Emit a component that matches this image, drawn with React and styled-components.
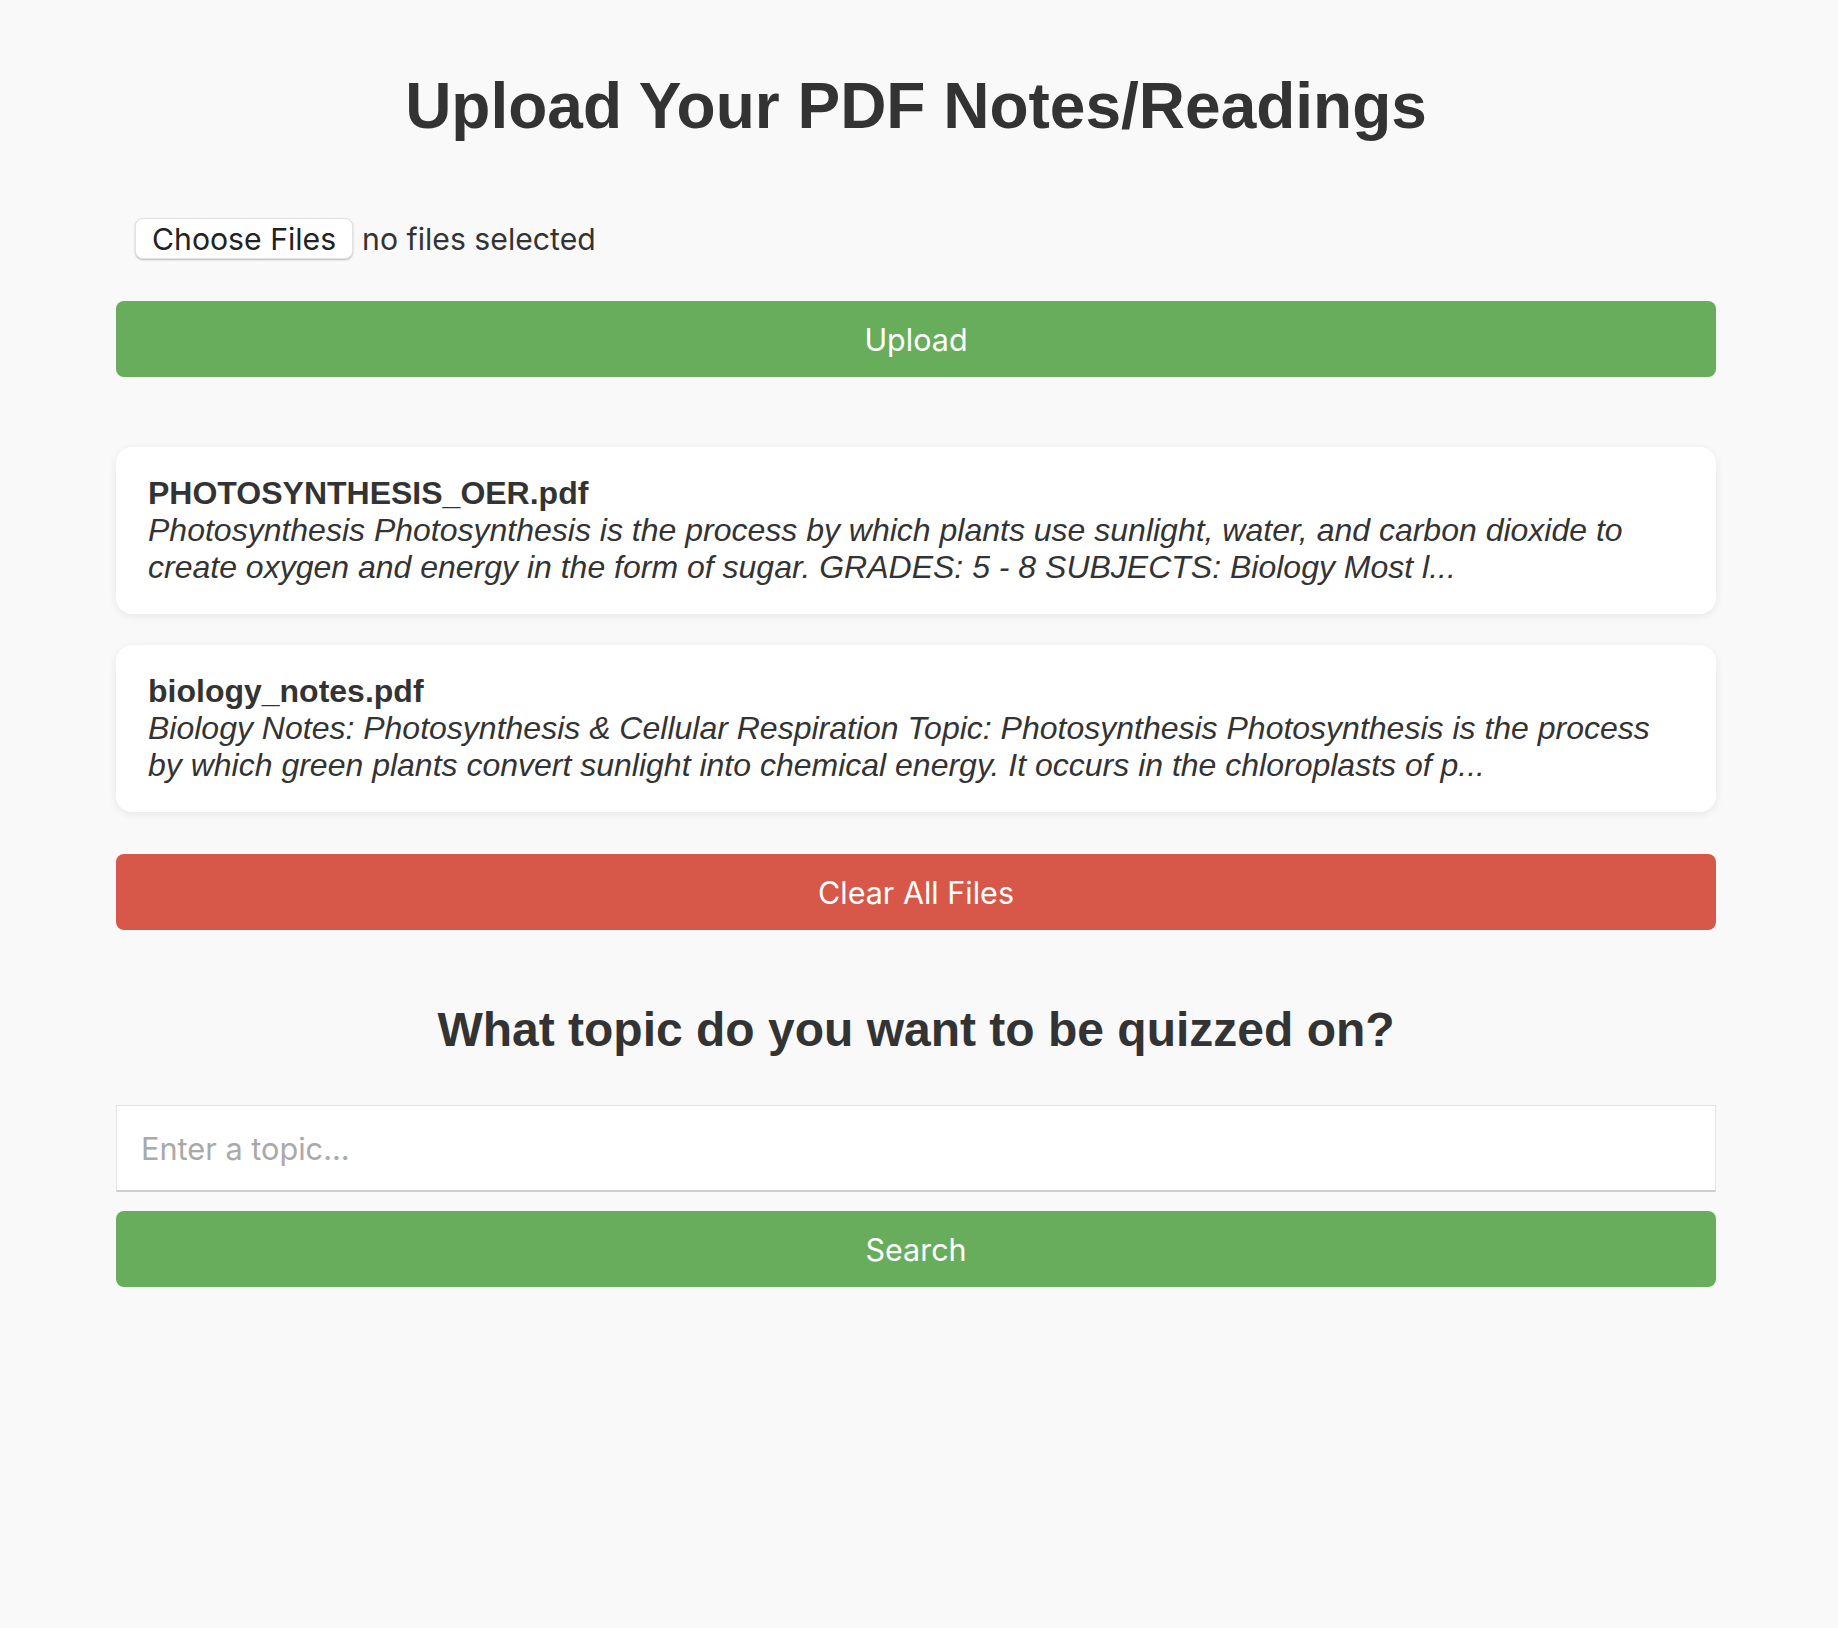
import React, { useState } from "react";
import styled, { createGlobalStyle } from "styled-components";

const GlobalStyle = createGlobalStyle`
  * {
    box-sizing: border-box;
  }
  body {
    margin: 0;
    padding: 0 6px 0 0;
    background-color: #f9f9f9;
    color: #333;
    font-family: "Liberation Sans", Arial, Helvetica, sans-serif;
  }
`;

const Container = styled.div`
  width: 1600px;
  margin: 0 auto;
  padding: 69px 0 200px;
  display: flex;
  flex-direction: column;
`;

const Title = styled.h1`
  margin: 0;
  font-size: 64px;
  font-weight: 700;
  text-align: center;
  color: #333;
`;

const SubTitle = styled.h2`
  margin: 72px 0 0;
  font-size: 48px;
  font-weight: 700;
  text-align: center;
  color: #333;
`;

const FileRow = styled.div`
  display: flex;
  align-items: center;
  gap: 9px;
  margin: 75px 0 0 19px;
  font-family: Inter, "Noto Sans", sans-serif;
`;

const ChooseButton = styled.label`
  display: flex;
  align-items: center;
  height: 41px;
  padding: 0 16px;
  background: #fff;
  border-radius: 8px;
  border: 1px solid #e2e2e2;
  box-shadow: 0 1px 2px rgba(0, 0, 0, 0.25);
  font-size: 30.2px;
  color: #222;
  cursor: pointer;

  input {
    display: none;
  }
`;

const FileStatus = styled.span`
  font-size: 30.2px;
  color: #333;
`;

const Button = styled.button`
  display: block;
  width: 100%;
  height: 76px;
  margin-top: ${(props) => props.gap}px;
  border: none;
  border-radius: 8px;
  background-color: ${(props) => (props.danger ? "#d75848" : "#68ad5c")};
  color: #fff;
  font-family: Inter, "Noto Sans", sans-serif;
  font-size: 30.5px;
  cursor: pointer;
`;

const FileList = styled.div`
  display: flex;
  flex-direction: column;
  gap: 31px;
  margin-top: 70px;
`;

const FileCard = styled.div`
  padding: 28px 32px;
  background: #fff;
  border-radius: 16px;
  box-shadow: 0 2px 8px rgba(0, 0, 0, 0.08);
  font-size: 32px;
`;

const FileName = styled.div`
  font-weight: 700;
`;

const Preview = styled.div`
  font-style: italic;
`;

const TopicInput = styled.input`
  display: block;
  width: 100%;
  height: 87px;
  margin-top: 48px;
  padding: 0 24px;
  border: 1px solid #e4e4e4;
  border-bottom: 2px solid #cfcfcf;
  background: #fff;
  font-family: Inter, "Noto Sans", sans-serif;
  font-size: 30.7px;
  color: #333;
  outline: none;

  &::placeholder {
    color: #a9a9a9;
  }
`;

const files = [
  {
    name: "PHOTOSYNTHESIS_OER.pdf",
    preview:
      "Photosynthesis Photosynthesis is the process by which plants use sunlight, water, and carbon dioxide to create oxygen and energy in the form of sugar. GRADES: 5 - 8 SUBJECTS: Biology Most l...",
  },
  {
    name: "biology_notes.pdf",
    preview:
      "Biology Notes: Photosynthesis & Cellular Respiration Topic: Photosynthesis Photosynthesis is the process by which green plants convert sunlight into chemical energy. It occurs in the chloroplasts of p...",
  },
];

const App = () => {
  const [topic, setTopic] = useState("");

  return (
    <>
      <GlobalStyle />
      <Container>
        <Title>Upload Your PDF Notes/Readings</Title>
        <FileRow>
          <ChooseButton>
            Choose Files
            <input type="file" multiple accept="application/pdf" />
          </ChooseButton>
          <FileStatus>no files selected</FileStatus>
        </FileRow>
        <Button gap={42}>Upload</Button>

        <FileList>
          {files.map((file) => (
            <FileCard key={file.name}>
              <FileName>{file.name}</FileName>
              <Preview>{file.preview}</Preview>
            </FileCard>
          ))}
        </FileList>
        <Button danger gap={42}>Clear All Files</Button>

        <SubTitle>What topic do you want to be quizzed on?</SubTitle>
        <TopicInput
          placeholder="Enter a topic..."
          value={topic}
          onChange={(e) => setTopic(e.target.value)}
        />
        <Button gap={19}>Search</Button>
      </Container>
    </>
  );
};

export default App;
